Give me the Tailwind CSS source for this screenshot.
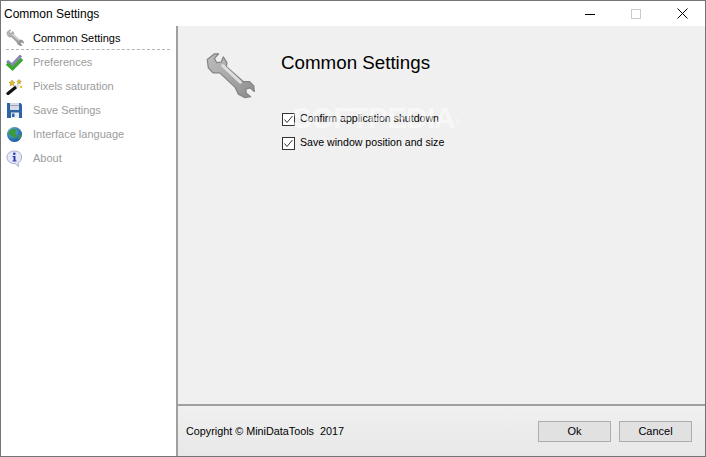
<!DOCTYPE html>
<html lang="en">
<head>
    <meta charset="UTF-8">
    <meta name="viewport" content="width=device-width, initial-scale=1.0">
    <title>Common Settings</title>
    <script src="https://cdn.jsdelivr.net/npm/@tailwindcss/browser@4"></script>
</head>
<body class="bg-white overflow-hidden">
    <svg width="0" height="0" class="absolute">
        <defs>
            <linearGradient id="steel" x1="0" y1="0" x2="1" y2="1">
                <stop offset="0" stop-color="#bdbdbd"/>
                <stop offset="0.5" stop-color="#a8a8a8"/>
                <stop offset="1" stop-color="#8c8c8c"/>
            </linearGradient>
            <symbol id="wrench" viewBox="0 0 60 60">
                <path d="M8 14L15 8.500L19 8.500L15 13L17 17L21.500 16.500L23.500 11.500L27 17L26.500 21L43 35.500L49 35.500L53 39.500L53.500 45L49.500 41.500L45.500 42.500L45.500 46.500L50 50L44.500 51L38 47.500L35 41L20 27L13.500 27L9 22Z" fill="url(#steel)" stroke="#858585" stroke-width="1.200" stroke-linejoin="round"/>
                <path d="M23 20L40 36" stroke="#dedede" stroke-width="3" stroke-linecap="round"/>
            </symbol>
        </defs>
    </svg>

    <div class="w-[706px] h-[457px] flex flex-col border border-[#747474] font-['Liberation_Sans',Arial,sans-serif] text-[11px] text-black">
        <header class="h-[25px] shrink-0 flex items-center justify-between bg-white">
            <span class="pl-[3px] pt-px text-[12px]">Common Settings</span>
            <div class="flex items-center h-full">
                <button class="w-[46px] h-full flex items-center justify-center">
                    <svg width="10" height="10" viewBox="0 0 10 10"><path d="M0 5.500H10" stroke="#000"/></svg>
                </button>
                <button class="w-[46px] h-full flex items-center justify-center">
                    <svg width="10" height="10" viewBox="0 0 10 10"><rect x=".5" y=".5" width="9" height="9" fill="none" stroke="#cccccc"/></svg>
                </button>
                <button class="w-[46px] h-full flex items-center justify-center">
                    <svg width="11" height="11" viewBox="0 0 11 11"><path d="M.5 .5L10.500 10.500M10.500 .5L.5 10.500" stroke="#000"/></svg>
                </button>
            </div>
        </header>

        <div class="flex-1 flex min-h-0">
            <nav class="w-[175px] shrink-0 bg-white pt-[1px] text-[#9c9c9c]">
                <div class="h-[23px] ml-[5px] mr-[6px] flex items-center border-b border-dashed border-[#b4b4b4] text-black">
                    <svg class="w-[22px] h-[22px] shrink-0 ml-[-2px] mr-[-3px]"><use href="#wrench"/></svg>
                    <span class="ml-[10px]">Common Settings</span>
                </div>
                <div class="h-[24px] ml-[5px] flex items-center">
                    <svg class="w-[17px] h-[17px] shrink-0" viewBox="0 0 17 17">
                        <path d="M1 7L6 11L15 1.500" fill="none" stroke="#8a86b4" stroke-width="3"/>
                        <path d="M1 9.500L6.500 14.500L16 5" fill="none" stroke="#3ea535" stroke-width="3.500"/>
                    </svg>
                    <span class="ml-[10px]">Preferences</span>
                </div>
                <div class="h-[24px] ml-[5px] flex items-center">
                    <svg class="w-[17px] h-[17px] shrink-0" viewBox="0 0 17 17">
                        <path d="M2 15.500L10 9" stroke="#111" stroke-width="3.200" stroke-linecap="round"/>
                        <path d="M10 9L13 6.500" stroke="#e0e0e0" stroke-width="3"/>
                        <path d="M6 2l1 2 2 .3-1.500 1.400.3 2L6 6.800 4.200 7.700l.3-2L3 4.300 5 4zM13 1.500l.7 1.500 1.600.2-1.100 1.100.2 1.500-1.400-.7-1.300.7.2-1.500-1-1.100 1.500-.2z" fill="#e8c22a" stroke="#9a7d10" stroke-width=".5"/>
                        <circle cx="15" cy="9" r="1.300" fill="#e8c22a"/>
                    </svg>
                    <span class="ml-[10px]">Pixels saturation</span>
                </div>
                <div class="h-[24px] ml-[5px] flex items-center">
                    <svg class="w-[17px] h-[17px] shrink-0" viewBox="0 0 17 17">
                        <path d="M1 1H14.500L16 2.500V16H1Z" fill="#2f63a8"/>
                        <rect x="4" y="1" width="9" height="7" fill="#d6dbe3"/>
                        <rect x="4" y="3" width="9" height="1" fill="#9aa6b8"/>
                        <rect x="5" y="10.500" width="8" height="5.500" fill="#e9edf2"/>
                        <rect x="6" y="11.500" width="2.500" height="3.500" fill="#2f63a8"/>
                    </svg>
                    <span class="ml-[10px]">Save Settings</span>
                </div>
                <div class="h-[24px] ml-[5px] flex items-center">
                    <svg class="w-[17px] h-[17px] shrink-0" viewBox="0 0 17 17">
                        <defs>
                            <radialGradient id="sea" cx=".35" cy=".3" r=".8">
                                <stop offset="0" stop-color="#6fb6e8"/>
                                <stop offset="1" stop-color="#0c4f96"/>
                            </radialGradient>
                        </defs>
                        <circle cx="8.500" cy="8.500" r="7.500" fill="url(#sea)"/>
                        <path d="M3 5L7 2.500L11 3.500L9.500 6.500L10.500 9.500L8 13L6 10L2.500 8.500Z" fill="#3c9a3c"/>
                        <path d="M12.500 9L15 8L14.500 12L12 13.500Z" fill="#3c9a3c"/>
                    </svg>
                    <span class="ml-[10px]">Interface language</span>
                </div>
                <div class="h-[24px] ml-[5px] flex items-center">
                    <svg class="w-[17px] h-[17px] shrink-0" viewBox="0 0 17 17">
                        <path d="M8.500 1C13 1 15.500 3.500 15.500 7C15.500 10 14 12 12 13L12.500 16.500L9 13.500C4 13.800 1 11 1 7C1 3.500 4 1 8.500 1Z" fill="#e6e8f7" stroke="#a9acd0"/>
                        <circle cx="8.300" cy="3.800" r="1.300" fill="#2a3fb0"/>
                        <path d="M6.500 6H9.500V10.500H10.500V11.500H6.500V10.500H7.500V7H6.500Z" fill="#2a3fb0"/>
                    </svg>
                    <span class="ml-[10px]">About</span>
                </div>
            </nav>

            <main class="flex-1 flex flex-col min-w-0 border-l-2 border-[#a0a0a0] bg-[#f0f0f0]">
                <div class="relative flex-1 flex pl-[21px] pt-[19px]">
                    <svg class="w-[62px] h-[62px] shrink-0"><use href="#wrench"/></svg>
                    <div class="ml-[20px]">
                        <h1 class="text-[18.75px] leading-[22px] mt-[7px]">Common Settings</h1>
                        <label class="flex items-center gap-[5px] ml-px mt-[33px] h-[24px] text-[10.6px]">
                            <svg class="w-[13px] h-[13px]" viewBox="0 0 13 13"><rect x=".5" y=".5" width="12" height="12" fill="#fff" stroke="#333"/><path d="M2.500 6.500L5 9.500L10.500 3" fill="none" stroke="#333"/></svg>
                            <span>Confirm application shutdown</span>
                        </label>
                        <label class="flex items-center gap-[5px] ml-px h-[24px] text-[10.6px]">
                            <svg class="w-[13px] h-[13px]" viewBox="0 0 13 13"><rect x=".5" y=".5" width="12" height="12" fill="#fff" stroke="#333"/><path d="M2.500 6.500L5 9.500L10.500 3" fill="none" stroke="#333"/></svg>
                            <span>Save window position and size</span>
                        </label>
                    </div>
                    <span class="absolute left-[114px] top-[77px] text-[30px] leading-none font-bold tracking-[-1px] text-white/50">SOFTPEDIA<sup class="text-[8px] font-normal">®</sup></span>
                </div>
                <footer class="h-[52px] shrink-0 flex items-center justify-between border-t-2 border-t-[#a0a0a0] pl-[8px] pr-[13px] bg-gradient-to-b from-[#f0f0f0] to-[#e8e8e8]">
                    <span class="text-[10.8px]">Copyright © MiniDataTools&nbsp; 2017</span>
                    <div class="flex gap-[8px]">
                        <button class="w-[73px] h-[21px] bg-[#e1e1e1] border border-[#adadad]">Ok</button>
                        <button class="w-[73px] h-[21px] bg-[#e1e1e1] border border-[#adadad]">Cancel</button>
                    </div>
                </footer>
            </main>
        </div>
    </div>
</body>
</html>
